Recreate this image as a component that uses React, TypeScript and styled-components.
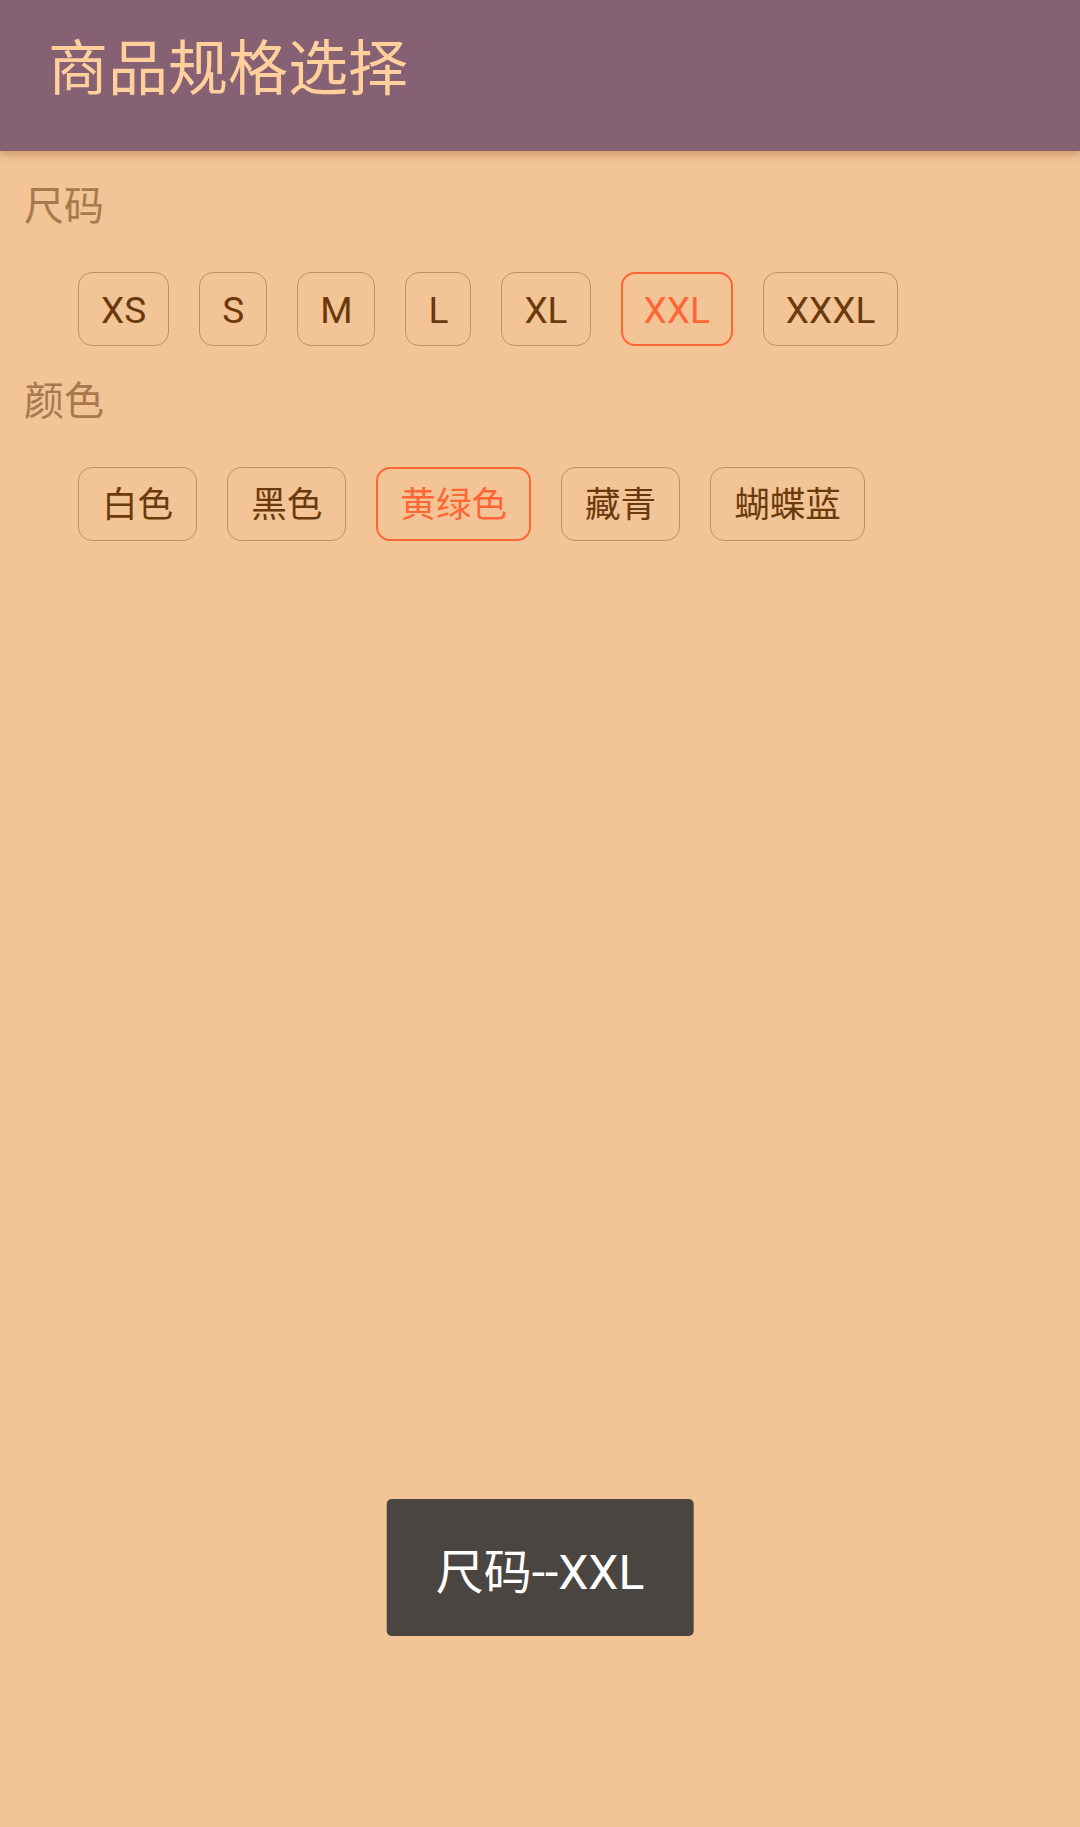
import React, { useState } from "react";
import styled, { createGlobalStyle } from "styled-components";

const GlobalStyle = createGlobalStyle`
  html, body {
    margin: 0;
    padding: 0;
    background: #f3c496;
  }
  body {
    font-family: Roboto, "Noto Sans CJK SC", sans-serif;
  }
`;

const Page = styled.div`
  position: relative;
  width: 1080px;
  height: 1827px;
  background: #f3c496;
  overflow: hidden;
`;

const Header = styled.header`
  height: 151px;
  background: #866073;
  box-shadow: 0 3px 8px rgba(140, 90, 50, 0.45);
  display: flex;
  align-items: flex-start;
  padding: 28px 0 0 48px;
  box-sizing: border-box;
  position: relative;
  z-index: 1;
`;

const Title = styled.h1`
  margin: 0;
  font-family: "Noto Sans CJK SC", sans-serif;
  font-weight: 400;
  font-size: 60px;
  line-height: 72px;
  color: #ffcf9c;
`;

const Content = styled.main`
  padding: 24px 0 0 24px;
  display: flex;
  flex-direction: column;
  gap: 24px;
`;

const Section = styled.section`
  display: flex;
  flex-direction: column;
  gap: 41px;
`;

const Label = styled.div`
  font-family: "Noto Sans CJK SC", sans-serif;
  font-size: 40px;
  line-height: 56px;
  color: #a8794d;
`;

const Options = styled.div`
  display: flex;
  flex-wrap: wrap;
  gap: 30px;
  padding-left: 54px;
`;

const Option = styled.button<{ $selected: boolean; $cjk?: boolean }>`
  box-sizing: border-box;
  height: 74px;
  padding: ${(p) => (p.$cjk ? 3 : 2)}px
    ${(p) => (p.$cjk ? 23 : 22) - (p.$selected ? 1 : 0)}px 0;
  border: ${(p) => (p.$selected ? "2px solid #ff6636" : "1px solid #c0906a")};
  border-radius: 14px;
  background: transparent;
  font-family: Roboto, "Noto Sans CJK SC", sans-serif;
  font-size: ${(p) => (p.$cjk ? 35.6 : 37)}px;
  line-height: 1;
  color: ${(p) => (p.$selected ? "#ff6636" : "#6b3a0c")};
  cursor: pointer;
  display: flex;
  align-items: center;
  justify-content: center;
  white-space: nowrap;
`;

const Toast = styled.div`
  position: absolute;
  left: 50%;
  top: 1499px;
  transform: translateX(-50%);
  height: 137px;
  padding: 0 49px;
  box-sizing: border-box;
  display: flex;
  align-items: center;
  background: #4a4540;
  border-radius: 5px;
  color: #ffffff;
  font-family: Roboto, "Noto Sans CJK SC", sans-serif;
  font-size: 48px;
  white-space: nowrap;
`;

const sizes = ["XS", "S", "M", "L", "XL", "XXL", "XXXL"];
const colors = ["白色", "黑色", "黄绿色", "藏青", "蝴蝶蓝"];

export default function App() {
  const [size, setSize] = useState("XXL");
  const [color, setColor] = useState("黄绿色");
  const [toast, setToast] = useState("尺码--XXL");

  return (
    <Page>
      <GlobalStyle />
      <Header>
        <Title>商品规格选择</Title>
      </Header>
      <Content>
        <Section>
          <Label>尺码</Label>
          <Options>
            {sizes.map((s) => (
              <Option
                key={s}
                $selected={s === size}
                onClick={() => {
                  setSize(s);
                  setToast(`尺码--${s}`);
                }}
              >
                {s}
              </Option>
            ))}
          </Options>
        </Section>
        <Section>
          <Label>颜色</Label>
          <Options>
            {colors.map((c) => (
              <Option
                key={c}
                $cjk
                $selected={c === color}
                onClick={() => {
                  setColor(c);
                  setToast(`颜色--${c}`);
                }}
              >
                {c}
              </Option>
            ))}
          </Options>
        </Section>
      </Content>
      {toast && <Toast>{toast}</Toast>}
    </Page>
  );
}
